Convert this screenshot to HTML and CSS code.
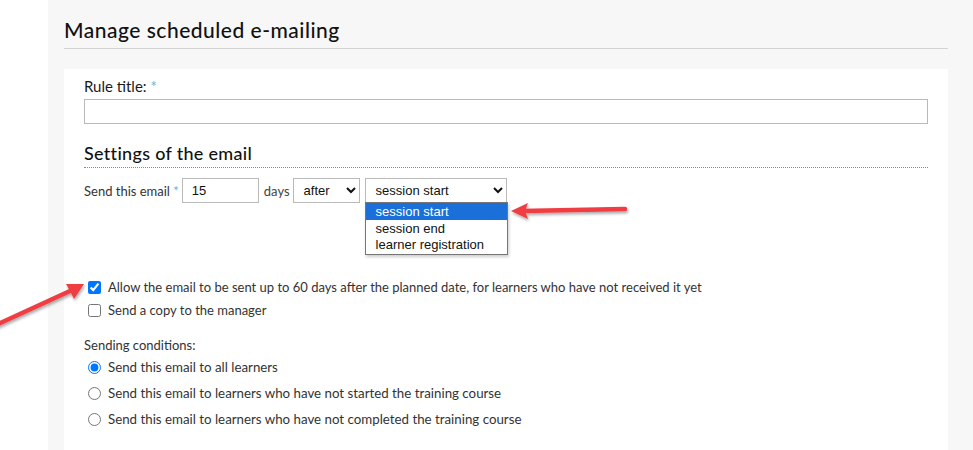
FILE: index.html
```html
<!DOCTYPE html>
<html lang="en">
<head>
<meta charset="utf-8">
<title>Manage scheduled e-mailing</title>
<link rel="stylesheet" href="styles.css">
</head>
<body>
<div class="page">
  <h1 class="page-title">Manage scheduled e-mailing</h1>
  <div class="card">
    <label class="field-label" for="rule-title">Rule title: <span class="req">*</span></label>
    <input class="text-input" id="rule-title" type="text">

    <h2 class="section-title">Settings of the email</h2>

    <div class="send-row">
      <span class="send-label">Send this email <span class="req">*</span></span>
      <input class="num-input" type="text" value="15">
      <span class="days">days</span>
      <select class="sel sel-when"><option>after</option></select>
      <div class="sel-wrap">
        <select class="sel sel-event"><option>session start</option></select>
        <ul class="dropdown">
          <li class="active">session start</li>
          <li>session end</li>
          <li>learner registration</li>
        </ul>
      </div>
    </div>

    <div class="checks">
      <label class="check"><input type="checkbox" checked> Allow the email to be sent up to 60 days after the planned date, for learners who have not received it yet</label>
      <label class="check"><input type="checkbox"> Send a copy to the manager</label>
    </div>

    <div class="conditions">
      <div class="cond-title">Sending conditions:</div>
      <label class="radio"><input type="radio" name="c" checked> Send this email to all learners</label>
      <label class="radio"><input type="radio" name="c"> Send this email to learners who have not started the training course</label>
      <label class="radio"><input type="radio" name="c"> Send this email to learners who have not completed the training course</label>
    </div>
  </div>
</div>

<svg class="arrow arrow-one" width="140" height="30" viewBox="0 0 140 30">
  <defs>
    <filter id="sh1" x="-20%" y="-50%" width="140%" height="200%">
      <feDropShadow dx="1" dy="2" stdDeviation="1.5" flood-color="#000" flood-opacity="0.35"/>
    </filter>
  </defs>
  <g filter="url(#sh1)">
    <line x1="125" y1="13" x2="22" y2="15" stroke="#ef3e42" stroke-width="4.5" stroke-linecap="round"/>
    <polygon points="11,15 28,7 25,15 28,23" fill="#ef3e42"/>
  </g>
</svg>

<svg class="arrow arrow-two" width="100" height="60" viewBox="0 0 100 60">
  <defs>
    <filter id="sh2" x="-20%" y="-50%" width="140%" height="200%">
      <feDropShadow dx="1" dy="2" stdDeviation="1.5" flood-color="#000" flood-opacity="0.35"/>
    </filter>
  </defs>
  <g filter="url(#sh2)">
    <line x1="-4" y1="50" x2="70" y2="16" stroke="#ef3e42" stroke-width="4.5" stroke-linecap="round"/>
    <polygon points="84,9 66,9 70,16 74,24" fill="#ef3e42"/>
  </g>
</svg>
</body>
</html>
```

FILE: styles.css
```css
html, body {
  margin: 0;
  padding: 0;
  background: #ffffff;
}

body {
  position: relative;
  font-family: "Lato", "Liberation Sans", sans-serif;
  color: #222;
  overflow: hidden;
  height: 450px;
}

.page {
  margin-left: 48px;
  background: #f7f7f7;
  height: 450px;
  padding: 16px 25px 0 16px;
  box-sizing: border-box;
  display: flex;
  flex-direction: column;
  overflow: hidden;
}

.page-title {
  margin: 0;
  font-family: "Lato", sans-serif;
  font-weight: 500;
  font-size: 21px;
  letter-spacing: 0.5px;
  color: #111;
  line-height: 28px;
  padding-bottom: 4px;
  border-bottom: 1px solid #d3d3d3;
}

.card {
  margin-top: 20px;
  background: #ffffff;
  padding: 8px 20px 0 20px;
  flex: 1;
}

.field-label {
  display: block;
  font-size: 15px;
  line-height: 18px;
  color: #1a1a1a;
}

.req {
  color: #6aaed6;
}

.text-input {
  display: block;
  box-sizing: border-box;
  width: 100%;
  height: 25px;
  margin-top: 4px;
  border: 1px solid #b9b9b9;
  border-radius: 0;
  padding: 0 6px;
  background: #fff;
}

.section-title {
  margin: 18px 0 0 0;
  font-weight: 500;
  font-size: 18px;
  letter-spacing: 0.3px;
  line-height: 22px;
  color: #111;
  padding-bottom: 3px;
  border-bottom: 1px dotted #8a8a8a;
}

.send-row {
  display: flex;
  align-items: center;
  margin-top: 10px;
  height: 25px;
  font-size: 13px;
}

.send-label {
  color: #333;
  margin-right: 3px;
}

.num-input {
  box-sizing: border-box;
  width: 77px;
  height: 25px;
  border: 1px solid #b9b9b9;
  border-radius: 0;
  padding: 0 9px;
  font-family: "Liberation Sans", Arial, sans-serif;
  font-size: 13px;
  color: #111;
}

.days {
  color: #444;
  margin: 0 3px 0 5px;
}

.sel {
  box-sizing: border-box;
  height: 25px;
  border: 1px solid #b9b9b9;
  border-radius: 0;
  background: #fff;
  font-family: "Liberation Sans", Arial, sans-serif;
  font-size: 13px;
  color: #111;
  padding: 0 6px;
}

.sel-when {
  width: 67px;
}

.sel-wrap {
  position: relative;
  margin-left: 5px;
}

.sel-event {
  width: 142px;
  padding-left: 6px;
}

.dropdown {
  position: absolute;
  left: 0;
  top: 24px;
  width: 143px;
  box-sizing: border-box;
  margin: 0;
  padding: 0 0 1px 0;
  list-style: none;
  background: #fff;
  border: 1px solid #767676;
  box-shadow: 1px 2px 3px rgba(0,0,0,0.2);
  font-family: "Liberation Sans", Arial, sans-serif;
  font-size: 13px;
  color: #111;
  z-index: 2;
}

.dropdown li {
  height: 16.5px;
  line-height: 17px;
  padding-left: 10px;
}

.dropdown li.active {
  background: #1a6fd8;
  color: #fff;
}

.checks {
  margin-top: 77px;
  display: flex;
  flex-direction: column;
  gap: 8px;
}

.check, .radio {
  display: flex;
  align-items: center;
  font-size: 13px;
  line-height: 15px;
  color: #333;
  padding-left: 4px;
}

.radio {
  font-size: 13.3px;
}

.check input, .radio input {
  margin: 0 7px 0 0;
  width: 13px;
  height: 13px;
}

.conditions {
  margin-top: 20px;
  display: flex;
  flex-direction: column;
}

.cond-title {
  font-size: 13px;
  line-height: 15px;
  color: #333;
  margin-bottom: 7px;
}

.conditions .radio {
  margin-bottom: 11px;
}

.arrow {
  position: absolute;
  overflow: visible;
  pointer-events: none;
}

.arrow-one {
  left: 500px;
  top: 196px;
}

.arrow-two {
  left: 0;
  top: 275px;
}
```
